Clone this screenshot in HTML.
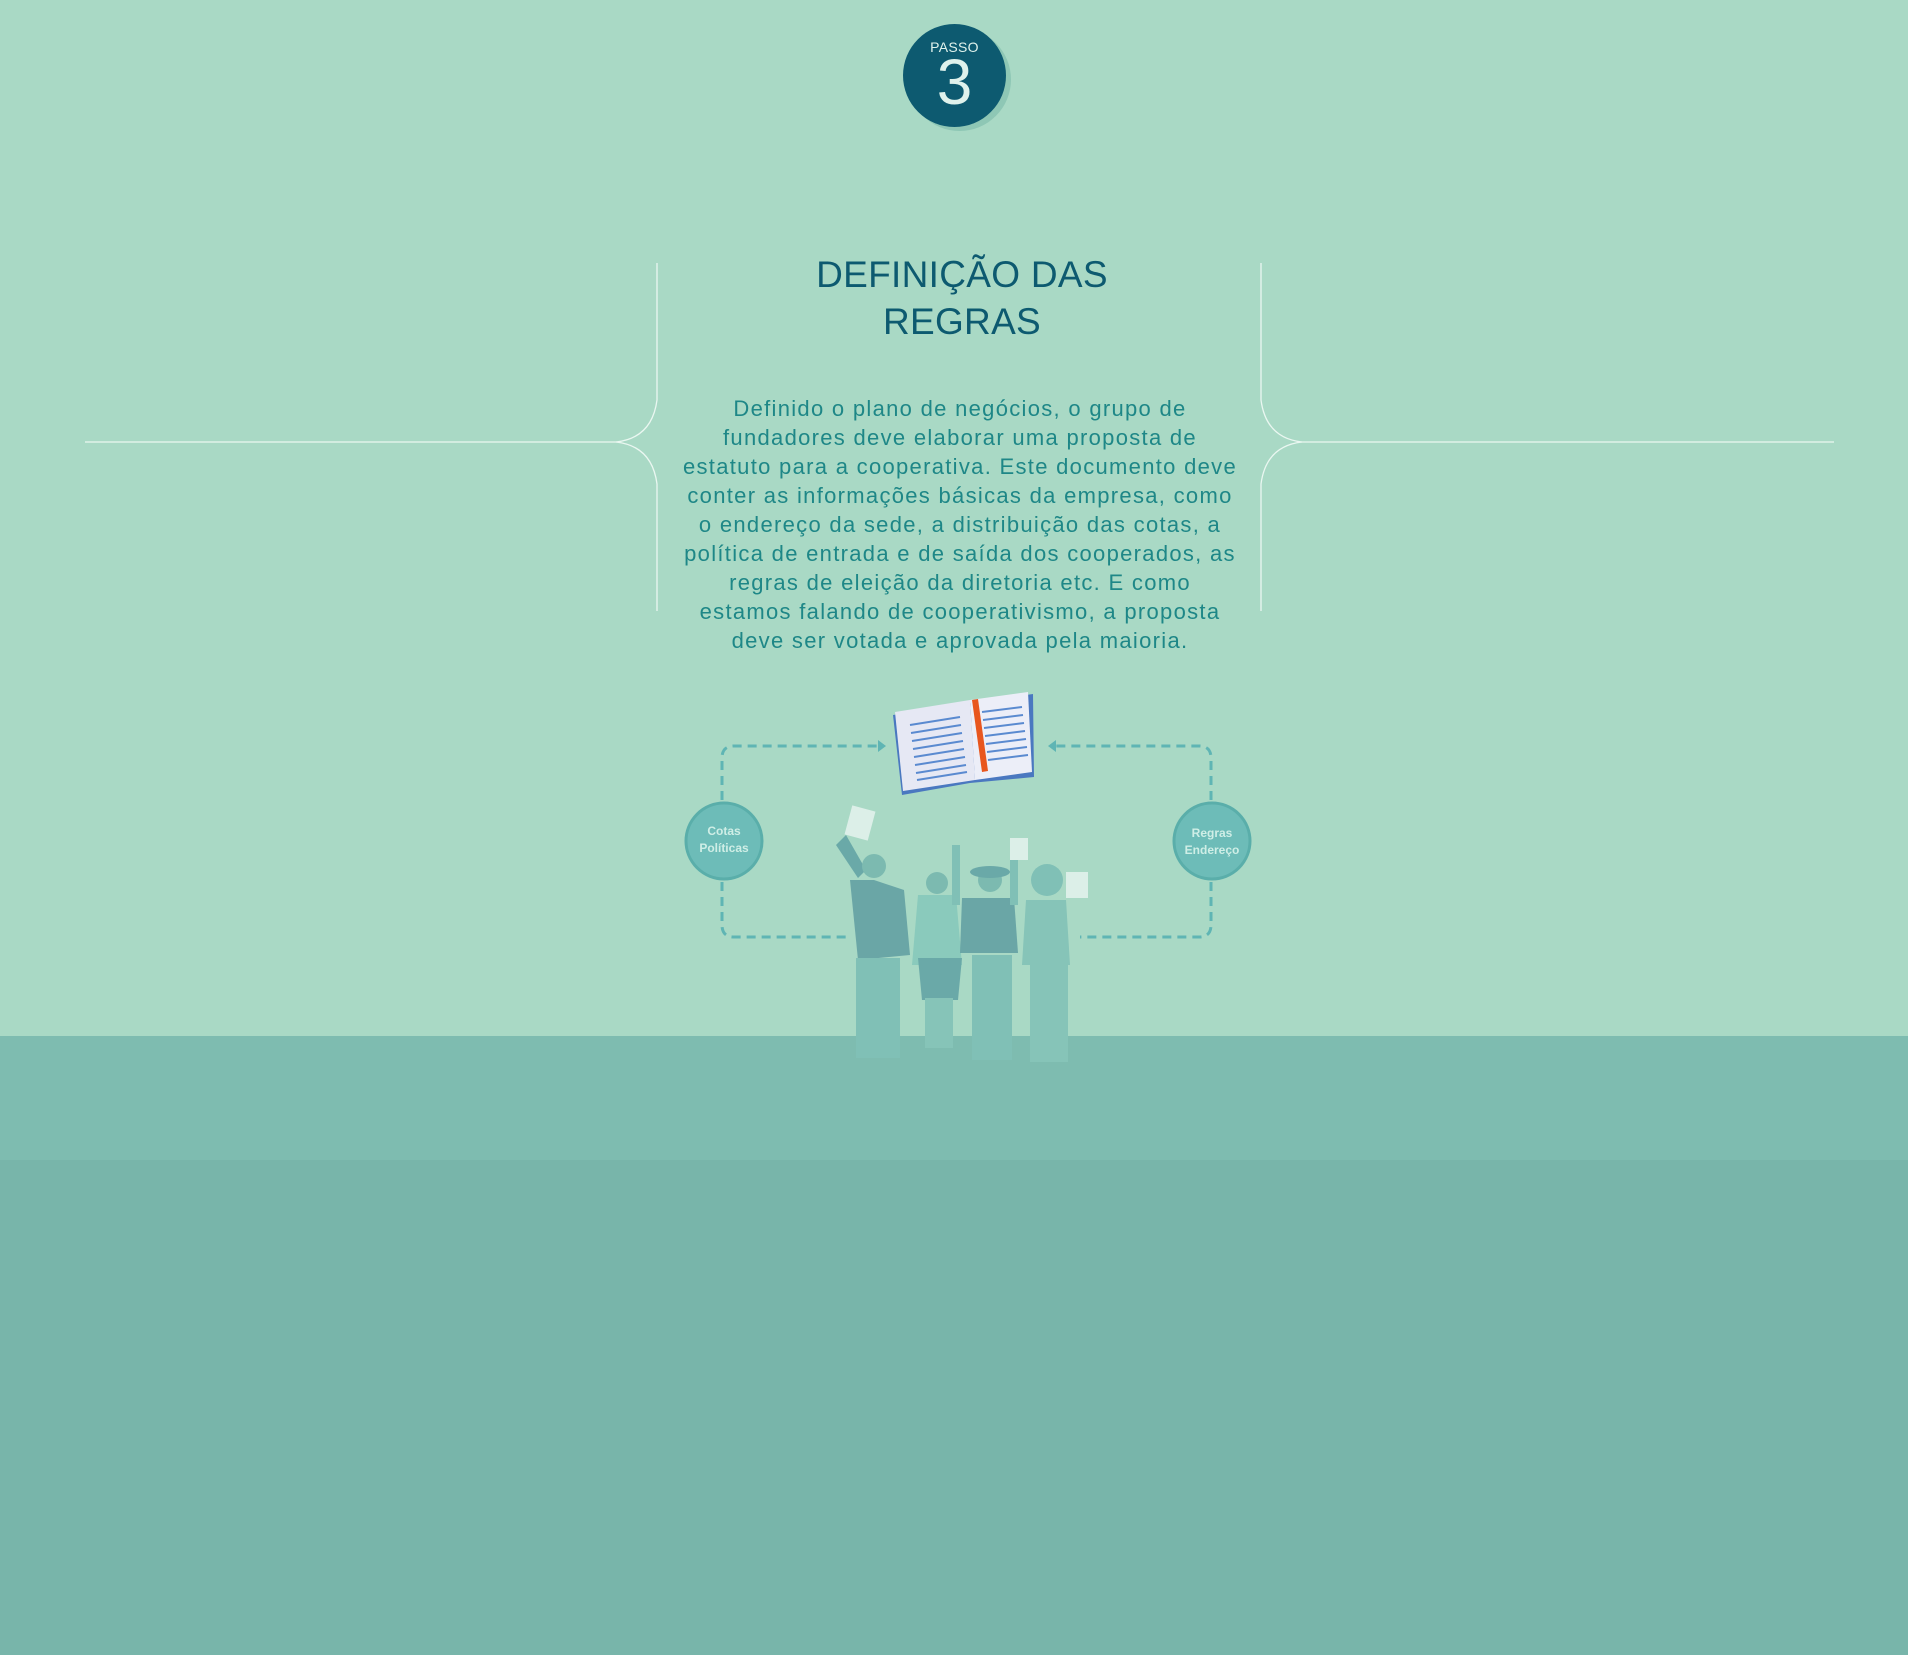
<!DOCTYPE html>
<html><head><meta charset="utf-8"><style>
html,body{margin:0;padding:0}
body{width:1908px;height:1655px;position:relative;overflow:hidden;background:#a9d9c5;font-family:"Liberation Sans",sans-serif}
.b1{position:absolute;left:0;top:1036px;width:1908px;height:124px;background:#7ebcb0}
.b2{position:absolute;left:0;top:1160px;width:1908px;height:495px;background:#78b5aa}
.circ{position:absolute;left:903px;top:24px;width:103px;height:103px;border-radius:50%;background:#0d5a70;box-shadow:5px 4px 0 #8ec7b5;color:#dff2ec;text-align:center}
.circ .p{font-size:14px;margin-top:15px;letter-spacing:0.3px}
.circ .n{font-size:64px;line-height:58px;margin-top:-2px}
h1{position:absolute;left:0;width:1924px;top:251px;margin:0;text-align:center;font-weight:normal;color:#0d5a70;font-size:37px;line-height:47px;letter-spacing:0.3px}
.txt{position:absolute;left:560px;width:800px;top:394px;text-align:center;color:#1e8787;font-size:22px;line-height:29px;letter-spacing:1.3px;white-space:nowrap}
svg{position:absolute;left:0;top:0}
</style></head><body>
<div class="b1"></div><div class="b2"></div>
<svg width="1908" height="1655">
<g fill="none" stroke="#eaf7f1" stroke-width="1.3">
<path d="M85 442 H616 Q652 438 657 400 V263"/>
<path d="M616 442 Q652 446 657 484 V611"/>
<path d="M1834 442 H1302 Q1266 438 1261 400 V263"/>
<path d="M1302 442 Q1266 446 1261 484 V611"/>
</g>
<g fill="none" stroke="#5fb5b4" stroke-width="3" stroke-dasharray="9 6">
<path d="M722 800 V758 Q722 746 734 746 H878"/>
<path d="M722 882 V925 Q722 937 734 937 H850"/>
<path d="M1211 800 V758 Q1211 746 1199 746 H1056"/>
<path d="M1211 882 V925 Q1211 937 1199 937 H1080"/>
</g>
<path d="M878 740 l8 6 -8 6z M1056 740 l-8 6 8 6z" fill="#5fb5b4"/>
<circle cx="724" cy="841" r="38" fill="#6dbcb8" stroke="#5aaeaa" stroke-width="3"/>
<circle cx="1212" cy="841" r="38" fill="#6dbcb8" stroke="#5aaeaa" stroke-width="3"/>
<text x="724" y="835" fill="#cfeee6" font-size="12" text-anchor="middle" font-family="Liberation Sans" font-weight="bold">Cotas</text>
<text x="724" y="852" fill="#cfeee6" font-size="12" text-anchor="middle" font-family="Liberation Sans" font-weight="bold">Políticas</text>
<text x="1212" y="837" fill="#cfeee6" font-size="12" text-anchor="middle" font-family="Liberation Sans" font-weight="bold">Regras</text>
<text x="1212" y="854" fill="#cfeee6" font-size="12" text-anchor="middle" font-family="Liberation Sans" font-weight="bold">Endereço</text>
<g>
<path d="M893 715 L970 703 L1033 694 L1034 777 L970 783 L902 795 Z" fill="#4a78c0"/>
<path d="M895 712 L970 700 L975 780 L903 791 Z" fill="#e6e8f4"/>
<path d="M970 700 L1028 692 L1032 772 L975 780 Z" fill="#eceef8"/>
<g stroke="#5a8ad0" stroke-width="2">
<path d="M910 725 l50 -8 M911 733 l50 -8 M912 741 l50 -8 M913 749 l50 -8 M914 757 l50 -8 M915 765 l50 -8 M916 773 l50 -8 M917 780 l50 -8"/>
<path d="M982 712 l40 -5 M983 720 l40 -5 M984 728 l40 -5 M985 736 l40 -5 M986 744 l40 -5 M987 752 l40 -5 M988 760 l40 -5"/>
</g>
<path d="M972 700 L978 699 L988 771 L982 772 Z" fill="#e8561e"/>
</g>
<g fill="#7cbab0">
<path d="M836 845 L846 835 L866 870 L858 878 Z" fill="#6aa9a8"/>
<rect x="848" y="808" width="24" height="30" transform="rotate(15 860 823)" fill="#dcefe8"/>
<circle cx="874" cy="866" r="12"/>
<path d="M850 880 L874 880 L904 890 L910 955 L858 960 Z" fill="#6aa6a6"/>
<rect x="856" y="958" width="44" height="100" fill="#80c0b6"/>
<circle cx="937" cy="883" r="11"/>
<path d="M918 895 h38 l6 70 h-50z" fill="#8acabc"/>
<path d="M918 958 h44 l-4 42 h-36z" fill="#6aa9a8"/>
<rect x="925" y="998" width="28" height="50" fill="#86c4b8"/>
<rect x="952" y="845" width="8" height="60" fill="#80c0b6"/>
<circle cx="990" cy="880" r="12"/>
<ellipse cx="990" cy="872" rx="20" ry="6" fill="#6aa9a8"/>
<path d="M962 898 h52 l4 55 h-58z" fill="#6aa6a6"/>
<rect x="972" y="955" width="40" height="105" fill="#80c0b6"/>
<rect x="1010" y="840" width="8" height="65" fill="#80c0b6"/>
<rect x="1010" y="838" width="18" height="22" fill="#dcefe8"/>
<circle cx="1047" cy="880" r="16" fill="#80c0b6"/>
<path d="M1026 900 h40 l4 65 h-48z" fill="#86c4b8"/>
<rect x="1030" y="962" width="38" height="100" fill="#86c4b8"/>
<rect x="1066" y="872" width="22" height="26" fill="#dcefe8"/>
</g>
</svg>
<div class="circ"><div class="p">PASSO</div><div class="n">3</div></div>
<h1>DEFINIÇÃO DAS<br>REGRAS</h1>
<div class="txt">Definido o plano de negócios, o grupo de<br>fundadores deve elaborar uma proposta de<br>estatuto para a cooperativa. Este documento deve<br>conter as informações básicas da empresa, como<br>o endereço da sede, a distribuição das cotas, a<br>política de entrada e de saída dos cooperados, as<br>regras de eleição da diretoria etc. E como<br>estamos falando de cooperativismo, a proposta<br>deve ser votada e aprovada pela maioria.</div>
</body></html>
